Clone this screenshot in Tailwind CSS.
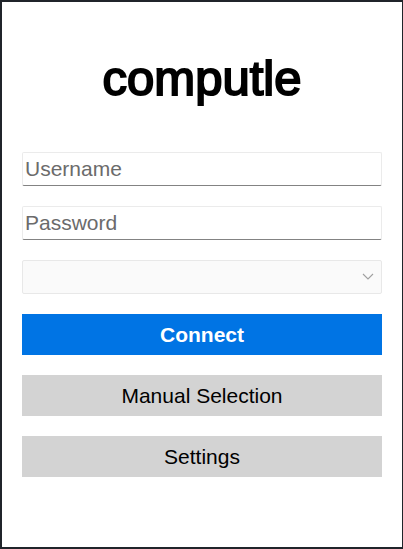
<!DOCTYPE html>
<html lang="en">
<head>
<meta charset="utf-8">
<meta name="viewport" content="width=device-width, initial-scale=1">
<title>computle</title>
<script src="https://cdn.jsdelivr.net/npm/@tailwindcss/browser@4"></script>
</head>
<body class="min-h-screen flex flex-col bg-white border-2 border-r border-[#20242a] font-['Liberation_Sans',Arial,sans-serif] text-[21px] leading-6 text-black">
<main class="flex-1 px-5 pt-[46px]">
  <h1 class="text-center text-[49px] leading-[60px] [-webkit-text-stroke:2px_black]">computle</h1>
  <form class="mt-11 flex flex-col gap-5">
    <input type="text" aria-label="Username" placeholder="Username" class="w-full h-[34px] px-0.5 rounded-xs border border-[#ebebeb] border-b-[#838383] bg-white placeholder:text-[#6b6b6b] outline-none">
    <input type="password" aria-label="Password" placeholder="Password" class="w-full h-[34px] px-0.5 rounded-xs border border-[#ebebeb] border-b-[#838383] bg-white placeholder:text-[#6b6b6b] outline-none">
    <div class="relative h-[34px]">
      <select aria-label="Machine" disabled class="block appearance-none w-full h-full rounded-xs border border-[#e8e8e8] bg-[#fafafa] opacity-100"></select>
      <svg class="absolute right-2 top-[11px] w-3 h-3 pointer-events-none" viewBox="0 0 12 12" fill="none" stroke="#a0a0a0" stroke-width="1.1" aria-hidden="true"><path d="M1 3 6 8 11 3"/></svg>
    </div>
    <button type="submit" class="h-[41px] bg-[#0074e4] text-white font-bold">Connect</button>
    <button type="button" class="h-[41px] bg-[#d3d3d3]">Manual Selection</button>
    <button type="button" class="h-[41px] bg-[#d3d3d3]">Settings</button>
  </form>
</main>
</body>
</html>
